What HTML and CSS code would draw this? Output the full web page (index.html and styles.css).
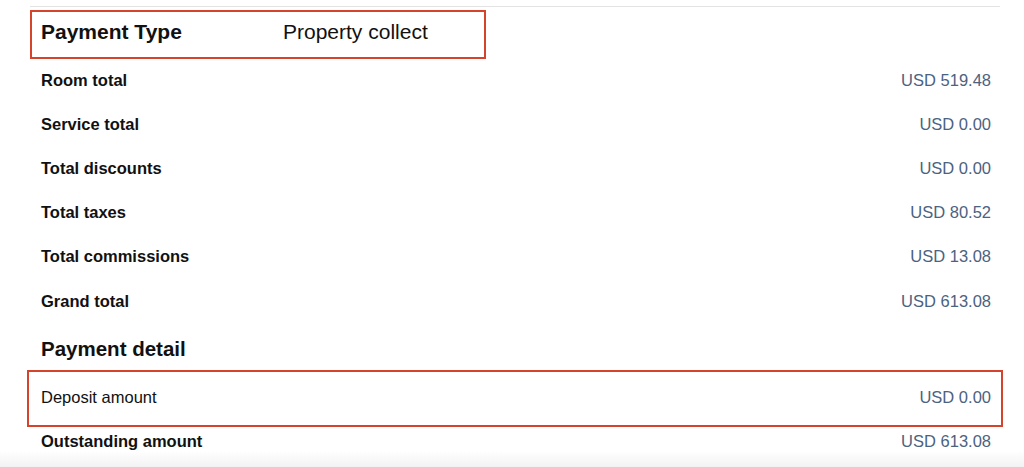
FILE: index.html
```html
<!DOCTYPE html>
<html lang="en">
<head>
<meta charset="utf-8">
<title>Payment summary</title>
<link rel="stylesheet" href="styles.css">
</head>
<body>
<div class="page">
  <section class="summary">
    <div class="payment-type">
      <span class="pt-label">Payment Type</span>
      <span class="pt-value">Property collect</span>
    </div>
    <div class="rows">
      <div class="row"><span class="label">Room total</span><span class="amount">USD 519.48</span></div>
      <div class="row"><span class="label">Service total</span><span class="amount">USD 0.00</span></div>
      <div class="row"><span class="label">Total discounts</span><span class="amount">USD 0.00</span></div>
      <div class="row"><span class="label">Total taxes</span><span class="amount">USD 80.52</span></div>
      <div class="row"><span class="label">Total commissions</span><span class="amount">USD 13.08</span></div>
      <div class="row"><span class="label">Grand total</span><span class="amount">USD 613.08</span></div>
    </div>
    <h2 class="section-title">Payment detail</h2>
    <div class="row highlight"><span class="label plain">Deposit amount</span><span class="amount">USD 0.00</span></div>
    <div class="row last"><span class="label">Outstanding amount</span><span class="amount">USD 613.08</span></div>
  </section>
  <div class="fade"></div>
</div>
</body>
</html>
```

FILE: styles.css
```css
html, body {
  margin: 0;
  padding: 0;
  background: #ffffff;
}

body {
  font-family: "Liberation Sans", Arial, Helvetica, sans-serif;
  color: #111111;
  overflow: hidden;
}

.page {
  padding-top: 6px;
}

.summary {
  margin-left: 30px;
  width: 970px;
  border-top: 1px solid #e3e3e3;
}

.payment-type {
  box-sizing: border-box;
  margin-top: 3px;
  width: 456px;
  height: 49px;
  border: 2px solid #d6432c;
  display: flex;
  align-items: center;
  padding: 0 0 5px 9px;
  font-size: 21px;
}

.pt-label {
  width: 242px;
  font-weight: bold;
}

.pt-value {
  font-weight: normal;
}

.rows {
  margin-top: -1px;
}

.row {
  box-sizing: border-box;
  height: 44.2px;
  display: flex;
  align-items: center;
  justify-content: space-between;
  padding: 0 9px 0 11px;
  font-size: 16.5px;
}

.label {
  font-weight: bold;
  color: #111111;
}

.label.plain {
  font-weight: normal;
}

.amount {
  color: #4b6281;
}

.section-title {
  box-sizing: border-box;
  margin: 0;
  height: 47px;
  display: flex;
  align-items: center;
  padding: 4px 0 0 11px;
  font-size: 20.5px;
  font-weight: bold;
}

.row.highlight {
  height: 57px;
  margin: 0 -3px;
  border: 2px solid #d6432c;
  padding: 0 10px 3px 12px;
}

.row.last {
  height: 44px;
  margin-top: -8px;
}

.fade {
  position: fixed;
  left: 0;
  right: 0;
  bottom: 0;
  height: 16px;
  background: linear-gradient(rgba(242, 242, 242, 0), #f2f2f2);
  pointer-events: none;
}
```
